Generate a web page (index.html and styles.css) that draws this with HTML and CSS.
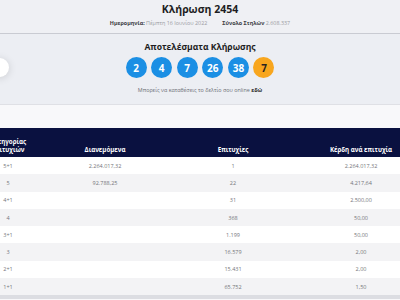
FILE: index.html
```html
<!DOCTYPE html>
<html lang="el">
<head>
<meta charset="utf-8">
<title>Κλήρωση 2454</title>
<link rel="stylesheet" href="styles.css">
</head>
<body>
<div class="page">
  <header class="draw-head">
    <h1 class="draw-title">Κλήρωση 2454</h1>
    <div class="draw-meta">
      <span><b>Ημερομηνία:</b> Πέμπτη 16 Ιουνίου 2022</span>
      <span><b>Σύνολο Στηλών</b> 2.608.337</span>
    </div>
  </header>
  <section class="results">
    <button class="nav-btn" aria-label="Προηγούμενη"></button>
    <h2 class="results-title">Αποτελέσματα Κλήρωσης</h2>
    <div class="balls">
      <span class="ball">2</span>
      <span class="ball">4</span>
      <span class="ball">7</span>
      <span class="ball">26</span>
      <span class="ball">38</span>
      <span class="ball ball-joker">7</span>
    </div>
    <p class="online">Μπορείς να καταθέσεις το δελτίο σου online <b>εδώ</b></p>
  </section>
  <div class="band"></div>
  <div class="table">
    <div class="row head">
      <div class="cell">Κατηγορίας Επιτυχιών</div>
      <div class="cell">Διανεμόμενα</div>
      <div class="cell">Επιτυχίες</div>
      <div class="cell">Κέρδη ανά επιτυχία</div>
    </div>
    <div class="row"><div class="cell">5+1</div><div class="cell">2.264.017,32</div><div class="cell">1</div><div class="cell">2.264.017,32</div></div>
    <div class="row"><div class="cell">5</div><div class="cell">92.788,25</div><div class="cell">22</div><div class="cell">4.217,64</div></div>
    <div class="row"><div class="cell">4+1</div><div class="cell"></div><div class="cell">31</div><div class="cell">2.500,00</div></div>
    <div class="row"><div class="cell">4</div><div class="cell"></div><div class="cell">368</div><div class="cell">50,00</div></div>
    <div class="row"><div class="cell">3+1</div><div class="cell"></div><div class="cell">1.199</div><div class="cell">50,00</div></div>
    <div class="row"><div class="cell">3</div><div class="cell"></div><div class="cell">16.579</div><div class="cell">2,00</div></div>
    <div class="row"><div class="cell">2+1</div><div class="cell"></div><div class="cell">15.431</div><div class="cell">2,00</div></div>
    <div class="row"><div class="cell">1+1</div><div class="cell"></div><div class="cell">65.752</div><div class="cell">1,50</div></div>
  </div>
</div>
</body>
</html>
```

FILE: styles.css
```css
* { box-sizing: border-box; }
html, body { margin: 0; padding: 0; }
body {
  width: 400px;
  height: 300px;
  overflow: hidden;
  background: #f8f8fa;
  font-family: "Open Sans", "Noto Sans", sans-serif;
  color: #222;
}
.page { width: 400px; }

.draw-head {
  background: #eff0f4;
  padding: 3px 0 6px;
  border-bottom: 1px solid #c9cbd2;
  text-align: center;
}
.draw-title {
  margin: 0;
  font-size: 10.5px;
  line-height: 13px;
  font-weight: 700;
  color: #1d1d22;
}
.draw-meta {
  margin-top: 3px;
  display: flex;
  justify-content: center;
  gap: 15px;
  font-size: 5.4px;
  line-height: 8px;
  color: #9a9ca3;
}
.draw-meta b { color: #3a3b42; font-weight: 700; }

.results {
  position: relative;
  background: #eceef3;
  padding: 8px 0 10px;
  text-align: center;
}
.nav-btn {
  position: absolute;
  left: -10px;
  top: 24px;
  width: 19px;
  height: 19px;
  border: 0;
  padding: 0;
  border-radius: 50%;
  background: #fff;
  box-shadow: 0 1px 8px rgba(0, 0, 0, 0.14);
}
.results-title {
  margin: 0;
  font-size: 8.6px;
  line-height: 11px;
  font-weight: 700;
  color: #1d1d22;
}
.balls {
  margin-top: 4px;
  display: flex;
  justify-content: center;
  gap: 4.6px;
}
.ball {
  width: 21px;
  height: 21px;
  border-radius: 50%;
  background: #1b8fe4;
  color: #fff;
  font-size: 10px;
  font-weight: 700;
  display: flex;
  align-items: center;
  justify-content: center;
}
.ball-joker { background: #f8a61e; color: #2a2320; }
.online {
  margin: 8px 0 0;
  font-size: 5.4px;
  line-height: 8px;
  color: #6d6f76;
}
.online b { color: #1d1d22; }

.band {
  height: 24px;
  border-top: 1px solid #dfe0e5;
  background: #f8f8fa;
}

.table {
  margin-left: -12px;
  width: 450px;
  border-bottom: 4px solid #dcdde2;
}
.row {
  display: grid;
  grid-template-columns: 40px 154px 102px 154px;
  height: 17.3px;
  align-items: center;
  font-size: 5.5px;
  color: #74757a;
  background: #fff;
}
.row:nth-child(odd) { background: #f3f3f5; }
.row.head {
  height: 29px;
  background: #0a1140;
  color: #fff;
  font-weight: 700;
  font-size: 6.2px;
  line-height: 8px;
  align-items: end;
  padding-bottom: 3px;
}
.cell { text-align: center; }
```
